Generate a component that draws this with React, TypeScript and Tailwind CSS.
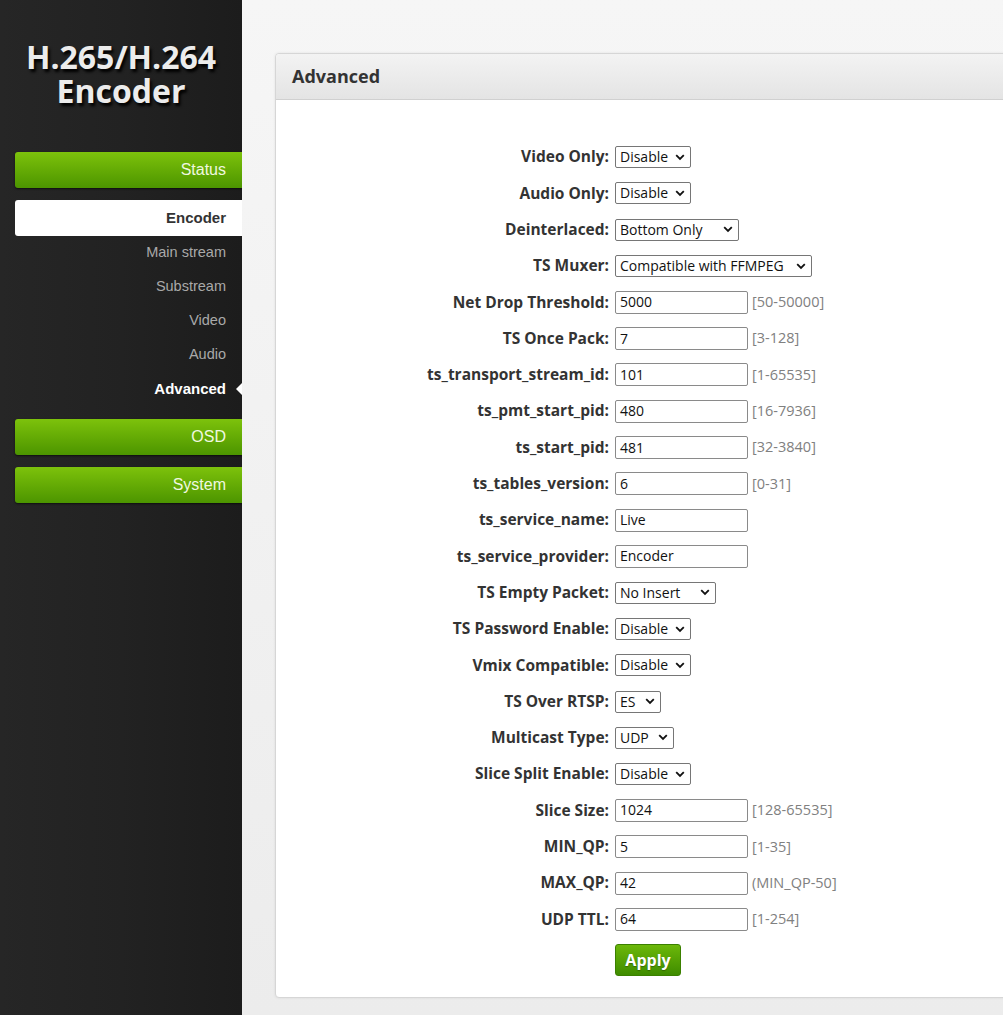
import React from 'react';

type Row =
  | { label: string; kind: 'select'; value: string; width: string }
  | { label: string; kind: 'input'; value: string; hint?: string };

const rows: Row[] = [
  { label: 'Video Only', kind: 'select', value: 'Disable', width: 'w-[76px]' },
  { label: 'Audio Only', kind: 'select', value: 'Disable', width: 'w-[76px]' },
  { label: 'Deinterlaced', kind: 'select', value: 'Bottom Only', width: 'w-[124px]' },
  { label: 'TS Muxer', kind: 'select', value: 'Compatible with FFMPEG', width: 'w-[197px]' },
  { label: 'Net Drop Threshold', kind: 'input', value: '5000', hint: '[50-50000]' },
  { label: 'TS Once Pack', kind: 'input', value: '7', hint: '[3-128]' },
  { label: 'ts_transport_stream_id', kind: 'input', value: '101', hint: '[1-65535]' },
  { label: 'ts_pmt_start_pid', kind: 'input', value: '480', hint: '[16-7936]' },
  { label: 'ts_start_pid', kind: 'input', value: '481', hint: '[32-3840]' },
  { label: 'ts_tables_version', kind: 'input', value: '6', hint: '[0-31]' },
  { label: 'ts_service_name', kind: 'input', value: 'Live' },
  { label: 'ts_service_provider', kind: 'input', value: 'Encoder' },
  { label: 'TS Empty Packet', kind: 'select', value: 'No Insert', width: 'w-[101px]' },
  { label: 'TS Password Enable', kind: 'select', value: 'Disable', width: 'w-[76px]' },
  { label: 'Vmix Compatible', kind: 'select', value: 'Disable', width: 'w-[76px]' },
  { label: 'TS Over RTSP', kind: 'select', value: 'ES', width: 'w-[46px]' },
  { label: 'Multicast Type', kind: 'select', value: 'UDP', width: 'w-[59px]' },
  { label: 'Slice Split Enable', kind: 'select', value: 'Disable', width: 'w-[76px]' },
  { label: 'Slice Size', kind: 'input', value: '1024', hint: '[128-65535]' },
  { label: 'MIN_QP', kind: 'input', value: '5', hint: '[1-35]' },
  { label: 'MAX_QP', kind: 'input', value: '42', hint: '(MIN_QP-50]' },
  { label: 'UDP TTL', kind: 'input', value: '64', hint: '[1-254]' },
];

const Chevron = () => (
  <svg width="10" height="7" viewBox="0 0 10 7" className="shrink-0">
    <path d="M1.2 1.2 L5 5 L8.8 1.2" fill="none" stroke="#111" strokeWidth="1.8" />
  </svg>
);

const SideButton = ({ label }: { label: string }) => (
  <div className="ml-[15px] h-[36px] flex items-center justify-end pr-[16px] rounded-l-[3px] bg-gradient-to-b from-[#7dc20c] to-[#4c9500] text-[16px] text-[#f0f8e0] shadow-[0_1px_2px_rgba(0,0,0,0.6)]">
    {label}
  </div>
);

const SubItem = ({ label, active }: { label: string; active?: boolean }) => (
  <div className="relative h-[34px] flex items-center justify-end pr-[16px]">
    <span className={active ? 'text-white font-bold text-[15px]' : 'text-[#a9a9a9] text-[14.5px]'}>{label}</span>
    {active && (
      <span className="absolute right-0 top-1/2 -translate-y-1/2 w-0 h-0 border-y-[6px] border-y-transparent border-r-[6px] border-r-white" />
    )}
  </div>
);

export default function App() {
  return (
    <div className="flex w-[1003px] h-[1015px] overflow-hidden bg-[#f1f1f1]">
      <aside
        className="w-[242px] shrink-0 bg-gradient-to-r from-[#262626] via-[#222222] to-[#1c1c1c] pt-[40px]"
        style={{ fontFamily: '"Liberation Sans", Arial, sans-serif' }}
      >
        <div
          className="text-center text-[#ececec] font-bold text-[32px] [text-shadow:2px_3px_3px_#000]"
          style={{ fontFamily: '"Open Sans", "Noto Sans", sans-serif' }}
        >
          <div className="h-[34px] leading-[34px]">H.265/H.264</div>
          <div className="h-[34px] leading-[34px]">Encoder</div>
        </div>
        <div className="mt-[44px] flex flex-col">
          <SideButton label="Status" />
          <div className="mt-[12px] ml-[15px] h-[36px] flex items-center justify-end pr-[16px] rounded-l-[3px] bg-white text-[15px] font-bold text-[#333]">
            Encoder
          </div>
          <div className="flex flex-col">
            <SubItem label="Main stream" />
            <SubItem label="Substream" />
            <SubItem label="Video" />
            <SubItem label="Audio" />
            <SubItem label="Advanced" active />
          </div>
          <div className="mt-[13px]">
            <SideButton label="OSD" />
          </div>
          <div className="mt-[12px]">
            <SideButton label="System" />
          </div>
        </div>
      </aside>

      <main className="flex-1 bg-gradient-to-b from-[#f6f6f6] to-[#ececec] pl-[33px] pt-[53px]">
        <div className="mr-[-20px] h-[945px] bg-white border border-[#d6d6d6] rounded-[4px] shadow-[0_0_3px_rgba(0,0,0,0.08)]">
          <div
            className="h-[46px] flex items-center pl-[16px] bg-gradient-to-b from-[#f3f3f3] to-[#e4e4e4] border-b border-[#d0d0d0] rounded-t-[4px] text-[18px] font-bold text-[#333]"
            style={{ fontFamily: '"Open Sans", "Noto Sans", sans-serif' }}
          >
            Advanced
          </div>
          <div className="pt-[39px]" style={{ fontFamily: '"Open Sans", "Noto Sans", sans-serif' }}>
            {rows.map((r) => (
              <div key={r.label} className="h-[36.3px] flex items-center">
                <div className="w-[339px] text-right pr-[6px] text-[15.5px] font-bold text-[#333] leading-none whitespace-nowrap">
                  {r.label}:
                </div>
                {r.kind === 'select' ? (
                  <div
                    className={`${r.width} h-[22px] flex items-center justify-between pl-[4px] pr-[5px] border border-[#767676] rounded-[2px] bg-white text-[14px] text-[#111]`}
                  >
                    <span className="whitespace-nowrap leading-none">{r.value}</span>
                    <Chevron />
                  </div>
                ) : (
                  <>
                    <div className="w-[133px] h-[23px] flex items-center pl-[4px] border border-[#8a8a8a] rounded-[2px] bg-white text-[14px] text-[#111] leading-none">
                      {r.value}
                    </div>
                    {r.hint && (
                      <span className="ml-[4px] text-[14.5px] text-[#808080] leading-none">{r.hint}</span>
                    )}
                  </>
                )}
              </div>
            ))}
            <div className="mt-[6px] pl-[339px]">
              <div className="w-[66px] h-[32px] flex items-center justify-center rounded-[3px] bg-gradient-to-b from-[#6cb80a] to-[#3f8c00] border border-[#3b8000] text-white font-bold text-[16px] [text-shadow:0_1px_1px_rgba(0,0,0,0.3)]">
                Apply
              </div>
            </div>
          </div>
        </div>
      </main>
    </div>
  );
}
